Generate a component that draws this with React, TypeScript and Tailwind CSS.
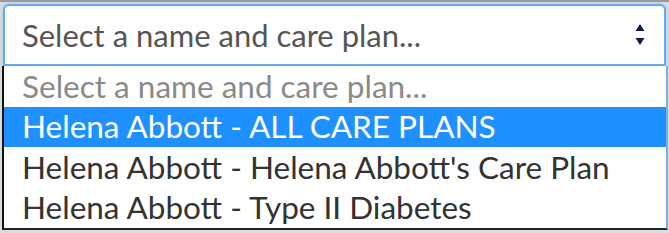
const OPTIONS = [
  { label: "Select a name and care plan...", placeholder: true },
  { label: "Helena Abbott - ALL CARE PLANS", active: true },
  { label: "Helena Abbott - Helena Abbott's Care Plan" },
  { label: "Helena Abbott - Type II Diabetes" },
];

function Arrows() {
  return (
    <svg width="10" height="24" viewBox="0 0 10 24" className="shrink-0">
      <path d="M5 1 L9.5 8 L0.5 8 Z" fill="#0d1f40" />
      <path d="M0.5 15 L9.5 15 L5 22 Z" fill="#0d1f40" />
    </svg>
  );
}

export default function App() {
  return (
    <div
      className="w-[669px] h-[233px] bg-[#dcdcdc] border-t-2 border-[#9a9a9a] overflow-hidden"
      style={{ fontFamily: "Lato, 'Noto Sans', sans-serif" }}
    >
      {/* Select box */}
      <div className="ml-[3px] mt-[2px] w-[663px] h-[62px] bg-white border-2 border-[#66aaf0] rounded-t-[6px] shadow-[0_0_4px_#9ecbf7] flex items-center pl-[17px] pr-[19px]">
        <span className="flex-1 text-[31px] text-[#555555] leading-none">
          Select a name and care plan...
        </span>
        <Arrows />
      </div>

      {/* Dropdown list */}
      <div className="ml-[2px] w-[666px] h-[164px] bg-white border-l-2 border-b-2 border-r-2 border-l-[#111] border-b-[#222] border-r-[#7ab0ea] flex flex-col">
        {OPTIONS.map((o) => (
          <div
            key={o.label}
            className={`h-[41px] flex items-center pl-[18px] text-[31.5px] leading-none ${
              o.active
                ? "bg-[#1e90ff] text-white"
                : o.placeholder
                ? "text-[#8a8a8a]"
                : "text-[#333333]"
            }`}
          >
            {o.label}
          </div>
        ))}
      </div>
    </div>
  );
}
